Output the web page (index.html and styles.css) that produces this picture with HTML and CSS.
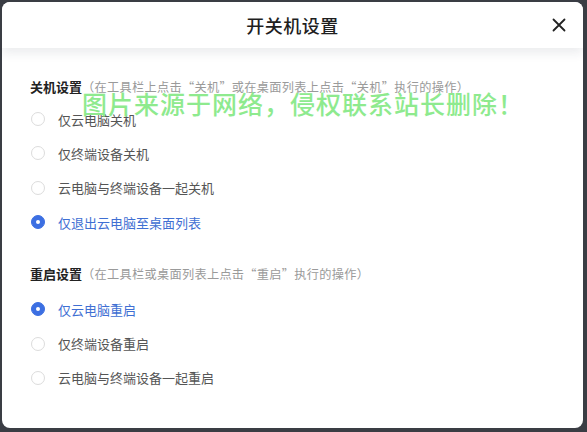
FILE: index.html
```html
<!DOCTYPE html>
<html lang="zh-CN">
<head>
<meta charset="utf-8">
<title>开关机设置</title>
<link rel="stylesheet" href="styles.css">
</head>
<body>
<div class="dialog">
  <div class="header">
    <div class="title">开关机设置</div>
    <button class="close" aria-label="关闭">
      <svg width="14" height="14" viewBox="0 0 14 14"><path d="M1.5 1.5 L12.5 12.5 M12.5 1.5 L1.5 12.5" stroke="#222" stroke-width="1.8" stroke-linecap="round"/></svg>
    </button>
  </div>
  <div class="content">
    <div class="section">
      <div class="sec-title"><span class="sec-name">关机设置</span><span class="hint">（在工具栏上点击“关机”或在桌面列表上点击“关机”执行的操作）</span></div>
      <div class="option"><span class="radio"></span><span class="label">仅云电脑关机</span></div>
      <div class="option"><span class="radio"></span><span class="label">仅终端设备关机</span></div>
      <div class="option"><span class="radio"></span><span class="label">云电脑与终端设备一起关机</span></div>
      <div class="option checked"><span class="radio"></span><span class="label">仅退出云电脑至桌面列表</span></div>
    </div>
    <div class="section second">
      <div class="sec-title"><span class="sec-name">重启设置</span><span class="hint">（在工具栏或桌面列表上点击“重启”执行的操作）</span></div>
      <div class="option checked"><span class="radio"></span><span class="label">仅云电脑重启</span></div>
      <div class="option"><span class="radio"></span><span class="label">仅终端设备重启</span></div>
      <div class="option"><span class="radio"></span><span class="label">云电脑与终端设备一起重启</span></div>
    </div>
  </div>
  <div class="watermark">图片来源于网络，侵权联系站长删除！</div>
</div>
</body>
</html>
```
FILE: styles.css
```css
html, body {
  margin: 0;
  padding: 0;
}
body {
  background: #3a3d44;
  width: 587px;
  height: 432px;
  overflow: hidden;
  font-family: "Noto Sans CJK SC", "Noto Sans", sans-serif;
}
.dialog {
  position: relative;
  margin: 2px 4px 0 2px;
  width: 581px;
  height: 426px;
  background: #fff;
  border-radius: 8px;
  overflow: hidden;
}
.header {
  position: relative;
  height: 46px;
  display: flex;
  align-items: center;
  justify-content: center;
  background: #fff;
  box-shadow: 0 5px 10px rgba(30, 40, 70, 0.09);
  z-index: 1;
}
.title {
  font-size: 18px;
  color: #1f1f1f;
  font-weight: 500;
  letter-spacing: 0.5px;
}
.close {
  position: absolute;
  right: 16px;
  top: 15px;
  width: 16px;
  height: 16px;
  padding: 0;
  border: none;
  background: none;
  display: flex;
  align-items: center;
  justify-content: center;
}
.content {
  padding: 27px 28px 0 28px;
  display: flex;
  flex-direction: column;
  gap: 23px;
}
.section {
  display: flex;
  flex-direction: column;
}
.sec-title {
  height: 20px;
  line-height: 20px;
  margin-bottom: 7px;
  white-space: nowrap;
}
.section.second .sec-title {
  margin-bottom: 10px;
}
.sec-name {
  font-size: 13px;
  font-weight: 700;
  color: #222;
}
.hint {
  font-size: 12.2px;
  color: #9a9a9a;
  letter-spacing: 0.3px;
}
.option {
  height: 34.3px;
  display: flex;
  align-items: center;
}
.radio {
  box-sizing: border-box;
  width: 14px;
  height: 14px;
  margin-left: 1px;
  border-radius: 50%;
  border: 1px solid #dcdcdc;
  background: #fff;
  position: relative;
}
.label {
  margin-left: 13px;
  font-size: 13px;
  color: #555;
}
.option.checked .radio {
  border-color: #3c6fe2;
  background: #3c6fe2;
}
.option.checked .radio::after {
  content: "";
  position: absolute;
  left: 50%;
  top: 50%;
  width: 4px;
  height: 4px;
  margin: -2px 0 0 -2px;
  border-radius: 50%;
  background: #fff;
}
.option.checked .label {
  color: #3f6fd3;
}
.watermark {
  position: absolute;
  left: 80px;
  top: 89px;
  font-size: 25px;
  line-height: 25px;
  font-weight: 500;
  letter-spacing: 1px;
  color: #8eea8e;
  white-space: nowrap;
  z-index: 2;
}
```
